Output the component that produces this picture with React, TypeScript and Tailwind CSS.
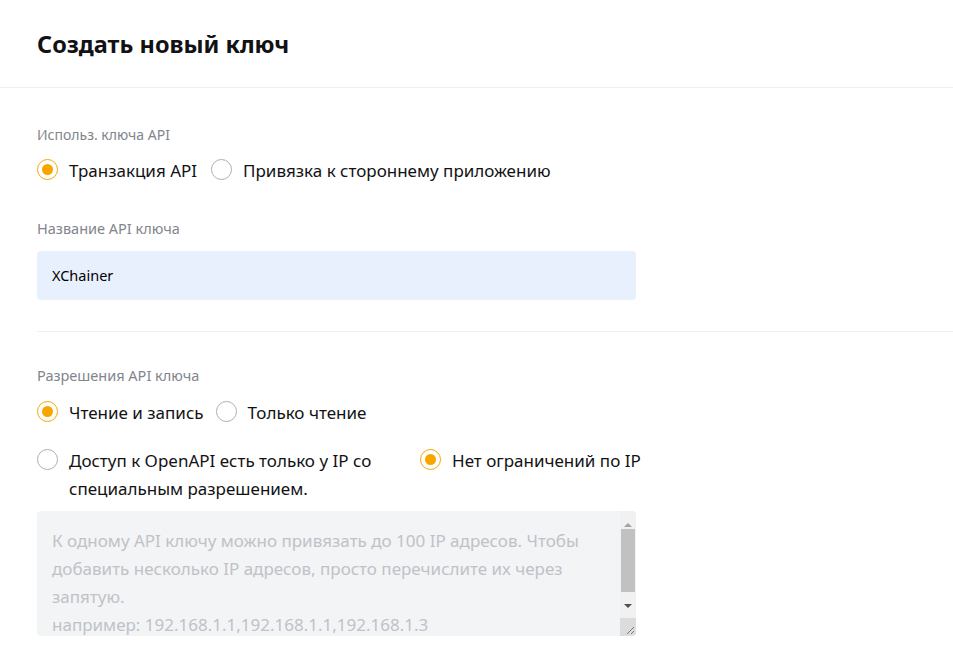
import { useState } from 'react'

function Radio({ checked, label, className = '' }: { checked: boolean; label: string; className?: string }) {
  return (
    <label className={`flex items-start gap-[11px] cursor-pointer ${className}`}>
      <span
        className={`mt-[2px] flex h-[21px] w-[21px] shrink-0 items-center justify-center rounded-full border ${
          checked ? 'border-[#f7a600]' : 'border-[#a9afb8]'
        }`}
      >
        {checked && <span className="h-[11px] w-[11px] rounded-full bg-[#f7a600]" />}
      </span>
      <span className="text-[17px] leading-[28px] text-[#121214]">{label}</span>
    </label>
  )
}

function FakeScrollbar() {
  return (
    <div className="flex w-[16px] shrink-0 flex-col bg-[#f1f1f1]">
      <div className="flex h-[18px] items-end justify-center pb-[2px]">
        <span className="h-0 w-0 border-x-[4px] border-b-[4px] border-x-transparent border-b-[#a3a3a3]" />
      </div>
      <div className="mx-[1px] h-[63px] bg-[#c1c1c1]" />
      <div className="flex h-[26px] items-center justify-center pt-[2px]">
        <span className="h-0 w-0 border-x-[4px] border-t-[4px] border-x-transparent border-t-[#505050]" />
      </div>
      <div className="flex flex-1 items-end justify-end bg-[#dcdcdc] p-[1px]">
        <svg width="10" height="10" viewBox="0 0 10 10">
          <path d="M9 2 L2 9 M9 6 L6 9" stroke="#7a7a7a" strokeWidth="1" />
        </svg>
      </div>
    </div>
  )
}

export default function App() {
  const [name] = useState('XChainer')
  const hint =
    'К одному API ключу можно привязать до 100 IP адресов. Чтобы добавить несколько IP адресов, просто перечислите их через запятую.\nнапример: 192.168.1.1,192.168.1.1,192.168.1.3'

  return (
    <div className="min-h-[652px] w-[953px] bg-white font-['Noto_Sans',sans-serif]">
      <div className="border-b border-[#eeeff1] px-[37px] pt-[28px] pb-[27px]">
        <h1 className="text-[23.5px] font-bold leading-[32px] text-[#121214]">Создать новый ключ</h1>
      </div>

      <div className="pl-[37px]">
        <div className="pt-[37px]">
          <div className="text-[14px] leading-[20px] text-[#81858c]">Использ. ключа API</div>
          <div className="mt-[12px] flex gap-[14px]">
            <Radio checked label="Транзакция API" />
            <Radio checked={false} label="Привязка к стороннему приложению" />
          </div>
        </div>

        <div className="pt-[33px]">
          <div className="text-[14.5px] leading-[20px] text-[#81858c]">Название API ключа</div>
          <div className="mt-[13px] flex h-[49px] w-[599px] items-center rounded-[4px] bg-[#e8f0fe] px-[15px]">
            <span className="text-[14.5px] text-black">{name}</span>
          </div>
        </div>

        <div className="mt-[31px] border-b border-[#eeeff1]" />

        <div className="pt-[33px] pb-[16px]">
          <div className="text-[14.5px] leading-[20px] text-[#81858c]">Разрешения API ключа</div>
          <div className="mt-[14px] flex gap-[12px]">
            <Radio checked label="Чтение и запись" />
            <Radio checked={false} label="Только чтение" />
          </div>
          <div className="mt-[20px] flex">
            <Radio
              checked={false}
              label="Доступ к OpenAPI есть только у IP со специальным разрешением."
              className="w-[383px] shrink-0 pr-[40px]"
            />
            <Radio checked label="Нет ограничений по IP" className="shrink-0 whitespace-nowrap" />
          </div>
          <div className="mt-[8px] flex h-[125px] w-[599px] overflow-hidden rounded-[4px] bg-[#f3f4f6]">
            <textarea
              readOnly
              defaultValue={hint}
              className="block h-full flex-1 resize-none overflow-hidden bg-transparent pl-[15px] pr-[10px] pt-[16px] text-[17px] leading-[28px] text-[#bfc2c7] outline-none"
            />
            <FakeScrollbar />
          </div>
        </div>
      </div>
    </div>
  )
}
